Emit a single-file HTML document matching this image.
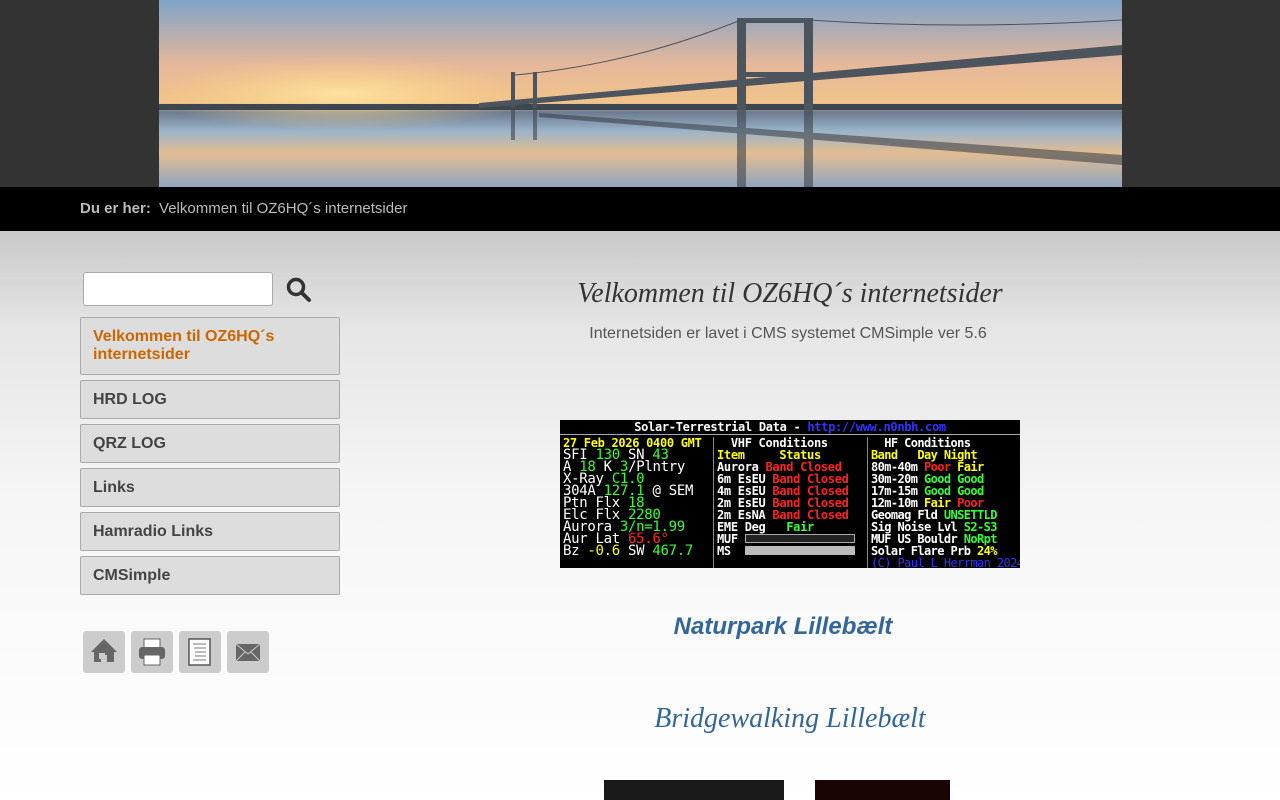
<!DOCTYPE html>
<html><head><meta charset="utf-8"><style>
*{margin:0;padding:0;box-sizing:border-box}
body{width:1280px;height:800px;overflow:hidden;font-family:"Liberation Sans",sans-serif;background:linear-gradient(#c9c9c9 231px,#e6e6e6 330px,#f6f6f6 500px,#fff 800px)}
#hd{height:187px;background:#333;position:relative}
#hd svg{position:absolute;left:159px;top:0}
#bc{height:44px;background:#000;color:#bbb;font-size:15px;padding:13px 0 0 80px}
#bc b{color:#bbb;margin-right:4px}
#side{position:absolute;left:80px;top:272px;width:260px}
.srch{width:190px;height:34px;background:#fff;border:1px solid #aaa;border-radius:3px;margin-left:3px}
.mi{background:#ddd;border:1px solid #aaa;border-radius:2px;padding:10px 12px;font-weight:bold;font-size:16px;color:#444;margin-bottom:5px;line-height:18px;height:39px}
.mi.big{height:58px}
.ic{position:absolute;top:359px;width:42px;height:42px;background:#ccc;border-radius:3px}
#main{position:absolute;left:340px;top:0;width:900px;text-align:center}
h1{position:absolute;top:278px;width:100%;font-family:"Liberation Serif",serif;font-style:italic;font-weight:normal;font-size:28px;color:#333}
.sub{position:absolute;top:325px;width:100%;color:#555;font-size:16px;left:-2px}
#sol{position:absolute;left:220px;top:420px;width:460px;height:148px;background:#000;font-family:"DejaVu Sans Mono",monospace;font-size:12px;color:#fff;text-align:left;overflow:hidden;line-height:12px;white-space:nowrap;letter-spacing:-0.3px}
.g{color:#3f3}.y{color:#ff0}.r{color:#f22}.b{color:#33f}
h2{position:absolute;width:100%;color:#336699;font-size:24px;font-style:italic}
</style></head><body>
<div id="hd"><svg width="963" height="187" viewBox="0 0 963 187">
<defs><linearGradient id="sk" x1="0" y1="0" x2="0" y2="1"><stop offset="0" stop-color="#7fa3c8"/><stop offset=".35" stop-color="#e7b89a"/><stop offset=".55" stop-color="#f0c48a"/><stop offset=".6" stop-color="#6d7b90"/><stop offset=".7" stop-color="#9cb4c9"/><stop offset=".82" stop-color="#e3bd92"/><stop offset="1" stop-color="#8fa6bf"/></linearGradient>
<radialGradient id="sun" cx=".19" cy=".5" r=".2"><stop offset="0" stop-color="#ffe7a0" stop-opacity=".9"/><stop offset="1" stop-color="#ffd080" stop-opacity="0"/></radialGradient></defs>
<rect width="963" height="187" fill="url(#sk)"/><rect width="963" height="187" fill="url(#sun)"/>
<rect x="0" y="104" width="963" height="6" fill="#3e4650"/>
<g fill="#4c545e"><polygon points="320,103 963,45 963,55 320,108"/><rect x="352" y="72" width="4" height="36"/><rect x="374" y="72" width="4" height="36"/><rect x="578" y="18" width="9" height="92"/><rect x="645" y="18" width="9" height="92"/><rect x="578" y="18" width="76" height="5"/><rect x="578" y="72" width="76" height="5"/></g>
<g stroke="#4c545e" fill="none" stroke-width="1"><path d="M356 75 Q470 65 582 20"/><path d="M650 20 Q800 30 963 20"/></g>
<g fill="#3c434c" opacity=".6"><rect x="578" y="110" width="9" height="77"/><rect x="645" y="110" width="9" height="77"/><rect x="352" y="110" width="4" height="30"/><rect x="374" y="110" width="4" height="30"/><polygon points="380,113 963,155 963,165 380,117"/></g>
</svg></div>
<div id="bc"><b>Du er her:</b> Velkommen til OZ6HQ´s internetsider</div>
<div id="side">
<div class="srch"></div>
<svg style="position:absolute;left:206px;top:5px" width="26" height="26" viewBox="0 0 26 26"><circle cx="10" cy="10" r="7.5" fill="none" stroke="#333" stroke-width="3.5"/><line x1="15.5" y1="15.5" x2="23" y2="23" stroke="#333" stroke-width="4" stroke-linecap="round"/></svg>
<div style="height:11px"></div>
<div class="mi big" style="color:#cc6600">Velkommen til OZ6HQ´s<br>internetsider</div>
<div class="mi">HRD LOG</div><div class="mi">QRZ LOG</div><div class="mi">Links</div><div class="mi">Hamradio Links</div><div class="mi">CMSimple</div>
<div class="ic" style="left:3px"><svg width="42" height="42"><polygon points="21,8 8,21 11,21 11,31 18,31 18,24 24,24 24,31 31,31 31,21 34,21" fill="#666"/><rect x="16" y="22" width="6" height="6" fill="#ccc"/></svg></div>
<div class="ic" style="left:51px"><svg width="42" height="42"><rect x="13" y="8" width="16" height="10" fill="#fff" stroke="#666"/><rect x="8" y="16" width="26" height="12" rx="3" fill="#666"/><rect x="13" y="24" width="16" height="10" fill="#fff" stroke="#666"/></svg></div>
<div class="ic" style="left:99px"><svg width="42" height="42"><rect x="10" y="8" width="21" height="26" fill="#fff" stroke="#555" stroke-width="1.5"/><g stroke="#777"><line x1="14" y1="13" x2="27" y2="13"/><line x1="15" y1="17" x2="27" y2="17"/><line x1="16" y1="21" x2="27" y2="21"/><line x1="16" y1="25" x2="27" y2="25"/><line x1="14" y1="29" x2="27" y2="29"/></g></svg></div>
<div class="ic" style="left:147px"><svg width="42" height="42"><rect x="9" y="13" width="24" height="17" fill="#666"/><path d="M9 13 L21 23 L33 13 M9 30 L18 21 M33 30 L24 21" stroke="#ccc" stroke-width="1" fill="none"/></svg></div>
</div>
<div id="main">
<h1>Velkommen til OZ6HQ´s internetsider</h1>
<div class="sub">Internetsiden er lavet i CMS systemet CMSimple ver 5.6</div>
<div id="sol">
<div style="text-align:center;border-bottom:1px solid #aaa;padding:1px 0;font-weight:bold">Solar-Terrestrial Data - <span class="b">http://www.n0nbh.com</span></div>
<div style="display:flex;padding:2px 3px;gap:3px">
<div style="width:148px;font-size:14px;line-height:12px"><span class="y" style="font-size:12px;font-weight:bold">27 Feb 2026 0400 GMT</span><br>SFI <span class="g">130</span> SN <span class="g">43</span><br>A <span class="g">18</span> K <span class="g">3</span>/Plntry<br>X-Ray <span class="g">C1.0</span><br>304A <span class="g">127.1</span> @ SEM<br>Ptn Flx <span class="g">18</span><br>Elc Flx <span class="g">2280</span><br>Aurora <span class="g">3/n=1.99</span><br>Aur Lat <span class="r">65.6°</span><br>Bz <span class="y">-0.6</span> SW <span class="g">467.7</span></div>
<div style="width:152px;border-left:1px solid #888;padding-left:3px;font-weight:bold">&nbsp; VHF Conditions<br><span class="y">Item &nbsp; &nbsp; Status</span><br>Aurora <span class="r">Band Closed</span><br>6m EsEU <span class="r">Band Closed</span><br>4m EsEU <span class="r">Band Closed</span><br>2m EsEU <span class="r">Band Closed</span><br>2m EsNA <span class="r">Band Closed</span><br>EME Deg &nbsp; <span class="g">Fair</span><br>MUF <span style="display:inline-block;width:110px;height:9px;background:#222;border:1px solid #aaa"></span><br>MS &nbsp;<span style="display:inline-block;width:110px;height:9px;background:#bbb"></span></div>
<div style="width:150px;border-left:1px solid #888;padding-left:3px;font-weight:bold;letter-spacing:-0.6px">&nbsp; HF Conditions<br><span class="y">Band &nbsp; Day Night</span><br>80m-40m <span class="r">Poor</span> <span class="y">Fair</span><br>30m-20m <span class="g">Good Good</span><br>17m-15m <span class="g">Good Good</span><br>12m-10m <span class="y">Fair</span> <span class="r">Poor</span><br>Geomag Fld <span class="g">UNSETTLD</span><br>Sig Noise Lvl <span class="g">S2-S3</span><br>MUF US Bouldr <span class="g">NoRpt</span><br>Solar Flare Prb <span class="y">24%</span><br><span class="b" style="font-weight:normal">(C) Paul L Herrman 2024</span></div>
</div></div>
<h2 style="top:613px;font-weight:bold;left:-7px">Naturpark Lillebælt</h2>
<h2 style="top:703px;font-family:'Liberation Serif',serif;font-size:28px;font-weight:normal;left:0">Bridgewalking Lillebælt</h2>
<div style="position:absolute;left:264px;top:780px;width:180px;height:20px;background:#1a1a1a"></div>
<div style="position:absolute;left:475px;top:780px;width:135px;height:20px;background:#1a0505"></div>
</div>
</body></html>
